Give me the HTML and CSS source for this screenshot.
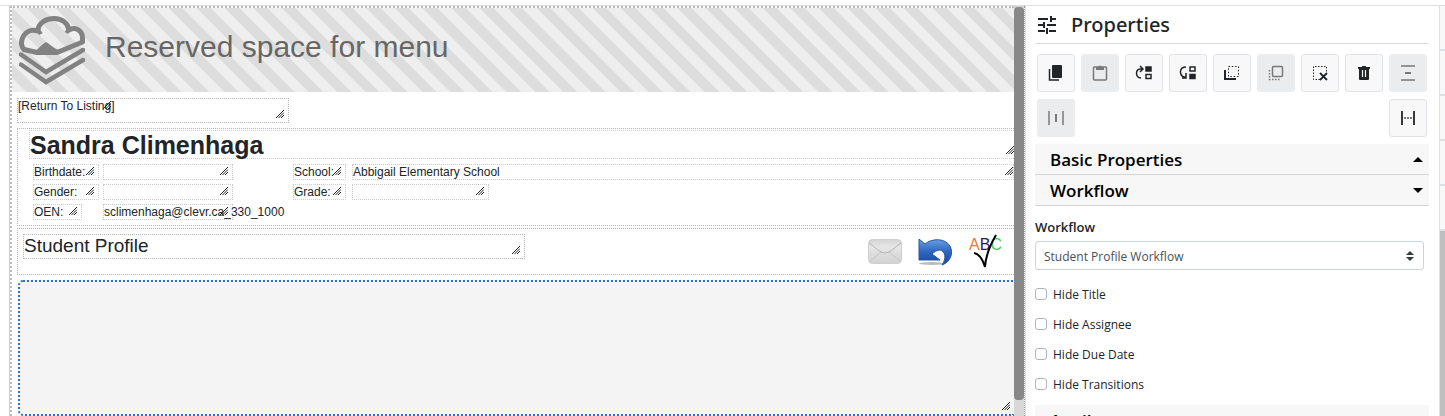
FILE: index.html
```html
<!DOCTYPE html>
<html lang="en">
	<head>
		<meta charset="UTF-8">
		<meta name="viewport" content="width=device-width, initial-scale=1">
		<title>Form designer</title>
		<link rel="stylesheet" href="styles.css">
	</head>
	<body>
		<svg class="defs" aria-hidden="true">
			<symbol id="grip" viewBox="0 0 8 8">
				<path d="M0 8L8 0M2.500 8L8 2.500M5 8L8 5" fill="none" stroke="#222" stroke-width="1"/>
			</symbol>
		</svg>
		<div class="designer">
			<main class="canvas">
				<div class="page">
					<div class="banner">
						<svg class="logo" viewBox="0 0 66 69" fill="none" stroke="#828282" stroke-width="5" aria-hidden="true">
							<path d="M5 33.500C2 30 2 25 4 21C7 15 13 13 19 15C19 7 27 2.500 35 2.500C43 2.500 49 7 50 14C57 10 63.500 15 63.500 22V26L38 36.500H18Z" stroke-linejoin="round"/>
							<path d="M17 14.500Q20 15 22 18M50 13.500Q49 14 47.500 17" stroke-width="4"/>
							<path d="M14 36C19 34 23 28 27 26C31 28 35 33 42 35L38 37H18Z" fill="#828282" stroke="none"/>
							<path d="M2 38.500L27 56L64 34M2 48.500L27 66L64 44" stroke-width="4.500" stroke-linecap="round"/>
						</svg>
						<span>Reserved space for menu</span>
					</div>
					<div class="box return">
						<a class="link" href="#">[Return To Listing]<svg class="grip"><use href="#grip"/></svg></a>
						<svg class="grip"><use href="#grip"/></svg>
					</div>
					<section class="box student">
						<h1 class="field name">Sandra Climenhaga<svg class="grip"><use href="#grip"/></svg></h1>
						<div class="details">
							<div class="field w-label">Birthdate:<svg class="grip"><use href="#grip"/></svg></div>
							<div class="field w-value"><svg class="grip"><use href="#grip"/></svg></div>
							<div class="field w-short">School:<svg class="grip"><use href="#grip"/></svg></div>
							<div class="field">Abbigail Elementary School<svg class="grip edge"><use href="#grip"/></svg></div>
							<div class="field w-label">Gender:<svg class="grip"><use href="#grip"/></svg></div>
							<div class="field w-value"><svg class="grip"><use href="#grip"/></svg></div>
							<div class="field w-short">Grade:<svg class="grip"><use href="#grip"/></svg></div>
							<div class="field w-grade"><svg class="grip"><use href="#grip"/></svg></div>
							<div class="field w-oen">OEN:<svg class="grip"><use href="#grip"/></svg></div>
							<div class="field w-value">sclimenhaga@clevr.ca_330_1000<svg class="grip"><use href="#grip"/></svg></div>
						</div>
					</section>
					<section class="box profile">
						<h2 class="box title">Student Profile<svg class="grip"><use href="#grip"/></svg></h2>
						<div class="tools">
							<button class="tool" type="button" aria-label="Send mail">
								<svg width="34" height="26" viewBox="0 0 34 26">
									<defs><linearGradient id="paper" x2="0" y2="1"><stop stop-color="#d4d4d4"/><stop offset=".3" stop-color="#e6e6e6"/><stop offset="1" stop-color="#d2d2d2"/></linearGradient></defs>
									<rect x=".5" y=".5" width="33" height="24" rx="4" fill="url(#paper)" stroke="#cfcfcf"/>
									<path d="M2 22L13 13M32 22L21 13" fill="none" stroke="#c4c4c4"/>
									<path d="M1 4C7 8 12 14 17 14S27 8 33 4" fill="none" stroke="#b2b2b2"/>
								</svg>
							</button>
							<button class="tool" type="button" aria-label="Undo">
								<svg width="35" height="28" viewBox="0 0 35 28">
									<defs><linearGradient id="blue" x2="0" y2="1"><stop stop-color="#6ba0e4"/><stop offset=".5" stop-color="#2c66bd"/><stop offset="1" stop-color="#1748a0"/></linearGradient></defs>
									<ellipse cx="14" cy="25.500" rx="13" ry="1.500" fill="#bbb"/>
									<path d="M1 1L7 6C14 0 27 0 32 8C36 16 32 24 24 27C29 20 27 13 22 12C19 12 16 14 14 16L22 22H1Z" fill="url(#blue)" stroke="#2457a8"/>
								</svg>
							</button>
							<button class="tool spell" type="button">
								<span class="abc"><i>A</i><i>B</i><i>C</i></span>
								<svg class="check" width="25" height="35" viewBox="0 0 25 35"><path d="M1 19Q8 20 12 33Q13 18 23 1" fill="none" stroke="#000" stroke-width="2"/></svg>
							</button>
						</div>
					</section>
					<section class="dropzone"><svg class="grip"><use href="#grip"/></svg></section>
				</div>
				<div class="scroll"><div class="thumb"></div></div>
			</main>
			<aside class="panel">
				<h2 class="heading">
					<svg width="20" height="20" viewBox="0 0 20 20" fill="none" stroke="#212529" stroke-width="2" aria-hidden="true">
						<path d="M1 4H11M15 4H19M14 1V7M1 10H6M10 10H19M7 7V13M1 16H8M12 16H19M10 13V19"/>
					</svg>
					Properties
				</h2>
				<div class="toolbar">
					<button type="button" aria-label="Copy">
						<svg viewBox="0 0 18 18" fill="#212529"><rect x="5" y="1" width="10" height="13" rx="1"/><path d="M2.500 5V16H12" fill="none" stroke="#212529" stroke-width="1.500"/></svg>
					</button>
					<button type="button" aria-label="Paste" disabled>
						<svg viewBox="0 0 18 18"><rect x="2.500" y="3" width="13" height="13" rx="1" fill="none" stroke="#77797b" stroke-width="1.500"/><path d="M5 3H7Q9 0 11 3H13V6H5Z" fill="#77797b"/></svg>
					</button>
					<button type="button" aria-label="Bring forward">
						<svg viewBox="0 0 18 18" fill="none" stroke="#212529" stroke-width="1.500"><path d="M6 14C0 13 0 5 6 5H8M5 2L8 5L5 8"/><rect x="11" y="3" width="5" height="4" fill="#212529"/><rect x="11" y="10.500" width="5" height="4"/></svg>
					</button>
					<button type="button" aria-label="Send backward">
						<svg viewBox="0 0 18 18" fill="none" stroke="#212529" stroke-width="1.500"><path d="M7 3C0 3 0 11 5 13H7M7 9V14H3"/><rect x="11" y="3" width="5" height="4"/><rect x="11" y="10.500" width="5" height="4" fill="#212529"/></svg>
					</button>
					<button type="button" aria-label="Bring to front">
						<svg viewBox="0 0 18 18" fill="none" stroke="#212529"><rect x="5.500" y="2.500" width="10" height="10" stroke-dasharray="1.500 1.830"/><path d="M2 6V15H13" stroke-width="2"/></svg>
					</button>
					<button type="button" aria-label="Send to back" disabled>
						<svg viewBox="0 0 18 18" fill="none" stroke="#77797b" stroke-width="1.500"><rect x="5.500" y="2.500" width="10" height="10" rx="1"/><path d="M2.500 6V15.500H13" stroke-dasharray="1.500 1.500"/></svg>
					</button>
					<button type="button" aria-label="Deselect">
						<svg viewBox="0 0 18 18" fill="none" stroke="#212529"><path d="M9 15.500H2.500V2.500H15.500V9" stroke-dasharray="1.500 1.500"/><path d="M9 9L16 16M16 9L9 16" stroke-width="1.800"/></svg>
					</button>
					<button type="button" aria-label="Delete">
						<svg viewBox="0 0 18 18" fill="#212529"><path d="M3 3H7V2H11V3H15V5H14V15Q14 16 13 16H5Q4 16 4 15V5H3Z"/><path d="M7.500 6V13M10.500 6V13" stroke="#f8f8f8" stroke-width="1.200"/></svg>
					</button>
					<button type="button" aria-label="Space vertically" disabled>
						<svg viewBox="0 0 18 18" stroke="#77797b" stroke-width="1.500"><path d="M2 2H16M2 16H16"/><path d="M6 9H12" stroke-width="2"/></svg>
					</button>
					<button type="button" aria-label="Center horizontally" disabled>
						<svg viewBox="0 0 18 18" stroke="#77797b" stroke-width="1.500"><path d="M2 2V16M16 2V16"/><path d="M9 5V13" stroke-width="2"/></svg>
					</button>
					<button type="button" aria-label="Space horizontally">
						<svg viewBox="0 0 18 18" stroke="#212529" stroke-width="1.800"><path d="M3 2V16M15 2V16"/><path d="M5 9H13" stroke-dasharray="2 1" stroke="#777"/></svg>
					</button>
				</div>
				<button class="group" type="button">Basic Properties<svg width="10" height="5" viewBox="0 0 10 5"><path d="M0 5L5 0L10 5Z"/></svg></button>
				<button class="group" type="button">Workflow<svg width="10" height="5" viewBox="0 0 10 5"><path d="M0 0H10L5 5Z"/></svg></button>
				<form class="options">
					<label class="caption" for="workflow">Workflow</label>
					<div class="select">
						<select id="workflow"><option>Student Profile Workflow</option></select>
						<svg width="8" height="10" viewBox="0 0 8 10" fill="#343a40"><path d="M0 4L4 0L8 4ZM0 6H8L4 10Z"/></svg>
					</div>
					<label class="check-row"><input type="checkbox">Hide Title</label>
					<label class="check-row"><input type="checkbox">Hide Assignee</label>
					<label class="check-row"><input type="checkbox">Hide Due Date</label>
					<label class="check-row"><input type="checkbox">Hide Transitions</label>
				</form>
				<button class="group" type="button">Attributes</button>
			</aside>
			<div class="rail"><span></span><span></span><span></span><span></span><span></span></div>
		</div>
	</body>
</html>
```

FILE: styles.css
```css
*, *:before, *:after {
	box-sizing: border-box;
}
body {
	margin: 0;
	background: #fff;
	color: #212529;
	font-family: "Open Sans", "Noto Sans", sans-serif;
	font-size: 12px;
	overflow: hidden;
}
h1, h2 {
	margin: 0;
	font-weight: inherit;
}
button {
	font-family: inherit;
	color: inherit;
}
.defs {
	display: none;
}
.designer {
	display: grid;
	grid-template-columns: minmax(0, 1fr) 414px 6px;
	grid-template-rows: 1px minmax(0, 1fr);
	height: 100vh;
	padding-top: 5px;
	padding-left: 9px;
}
.designer:before {
	content: "";
	grid-column: 1 / -1;
	height: 1px;
	margin-left: -9px;
	background: #ddd;
}

/* canvas */
.canvas {
	display: flex;
	border-left: 1px solid #ccc;
	border-right: 1px dotted #999;
	font-family: "Liberation Sans", Arial, sans-serif;
	min-height: 0;
}
.page {
	flex: 1;
	min-width: 0;
	display: flex;
	flex-direction: column;
	border: 2px dotted #bbb;
	border-width: 2px 0 0 2px;
	overflow: hidden;
}
.banner {
	display: flex;
	align-items: center;
	gap: 20px;
	height: 84px;
	flex: none;
	padding: 0 7px 6px;
	background: repeating-linear-gradient(45deg, #eee 0, #eee 10px, #ddd 10px, #ddd 20px);
	color: #666;
	font-size: 30px;
}
.logo {
	width: 66px;
	height: 69px;
	margin-top: 6px;
}
.box {
	position: relative;
	border: 1px dotted #b4b4b4;
}
.field {
	position: relative;
	height: 16px;
	border: 1px dotted #ccc;
	line-height: 14px;
	white-space: nowrap;
}
.grip {
	position: absolute;
	right: 4px;
	bottom: 4px;
	width: 8px;
	height: 8px;
}
.grip.edge {
	right: 0;
}
.return {
	flex: none;
	width: 272px;
	height: 25px;
	margin: 6px 0 5px 5px;
	line-height: 14px;
}
.link {
	position: relative;
	display: inline-block;
	color: inherit;
	text-decoration: none;
}
.student {
	flex: none;
	height: 98px;
	margin-left: 5px;
	padding: 1px 0 0 11px;
	border-right: 0;
}
.name {
	height: 29px;
	border-right: 0;
	font-size: 25px;
	font-weight: bold;
	line-height: 28px;
}
.name .grip {
	right: 0;
}
.details {
	display: grid;
	grid-template-columns: 70px 190px 59px 1fr;
	row-gap: 4px;
	padding: 5px 0 0 4px;
}
.w-label {
	width: 66px;
}
.w-value {
	width: 130px;
}
.w-short {
	width: 53px;
}
.w-grade {
	width: 137px;
}
.w-oen {
	width: 49px;
}
.profile {
	flex: none;
	display: flex;
	justify-content: space-between;
	height: 47px;
	margin: 2px 0 5px 5px;
	padding: 5px 12px 0 5px;
	border-right: 0;
}
.title {
	width: 502px;
	height: 25px;
	font-size: 19px;
	line-height: 21px;
}
.tools {
	display: flex;
	gap: 16px;
	height: 36px;
	align-items: center;
}
.tool {
	display: block;
	padding: 0;
	border: 0;
	background: none;
}
.tool svg {
	display: block;
}
.spell {
	position: relative;
	height: 36px;
	font-size: 16px;
}
.abc {
	display: block;
	height: 36px;
	line-height: 22px;
}
.abc i {
	font-style: normal;
	color: #e07b39;
}
.abc i:nth-child(2) {
	color: #2a1a66;
}
.abc i:nth-child(3) {
	color: #3ecf5a;
}
.spell .check {
	position: absolute;
	left: 4px;
	top: 0;
}
.dropzone {
	position: relative;
	flex: 1;
	margin-left: 6px;
	border: 2px dotted #2f6fd0;
	border-right: 0;
	border-radius: 5px 0 0 5px;
	background: #f4f4f4;
}
.scroll {
	width: 10px;
	padding-top: 1px;
	background: #d8d8d8;
}
.thumb {
	height: 96%;
	border-radius: 4px;
	background: #888;
}

/* properties panel */
.panel {
	border-left: 1px solid #ddd;
	padding: 0 10px 0 9px;
	min-height: 0;
	overflow: hidden;
}
.heading {
	display: flex;
	align-items: center;
	gap: 14px;
	height: 38px;
	padding-left: 2px;
	border-bottom: 1px solid #dcdcdc;
	font-family: "Noto Sans", sans-serif;
	font-size: 20px;
	font-weight: 500;
}
.toolbar {
	display: flex;
	flex-wrap: wrap;
	justify-content: space-between;
	gap: 7px 6px;
	padding: 10px 2px 7px;
}
.toolbar button {
	display: flex;
	align-items: center;
	justify-content: center;
	width: 38px;
	height: 38px;
	padding: 0;
	border: 1px solid #dee2e6;
	border-radius: 3px;
	background: #f8f8f8;
}
.toolbar button:disabled {
	border-color: #ebecee;
	background: #ebecee;
}
.toolbar svg {
	width: 18px;
	height: 18px;
}
.group {
	display: flex;
	align-items: center;
	justify-content: space-between;
	width: 100%;
	height: 31px;
	padding: 0 6px 0 15px;
	border: 0;
	border-bottom: 1px solid #d4d4d4;
	background: #f7f7f7;
	color: #000;
	font-size: 17px;
	font-weight: 600;
}
.options {
	padding: 11px 5px 6px 0;
}
.caption {
	display: block;
	font-size: 13px;
	font-weight: 600;
	line-height: 20px;
	padding-bottom: 4px;
}
.select {
	position: relative;
	margin-bottom: 9px;
}
.select select {
	display: block;
	width: 100%;
	height: 29px;
	padding: 2px 8px 0;
	border: 1px solid #ced4da;
	border-radius: 3px;
	background: #fff;
	color: #495057;
	font-family: inherit;
	font-size: 12px;
	appearance: none;
}
.select svg {
	position: absolute;
	right: 10px;
	top: 10px;
}
.check-row {
	display: flex;
	align-items: center;
	gap: 6px;
	height: 30px;
}
.check-row input {
	width: 12px;
	height: 12px;
	margin: 0;
	border: 1px solid #adb5bd;
	border-radius: 3px;
	background: #fff;
	appearance: none;
}

/* tab strip on the far right */
.rail {
	display: grid;
	grid-auto-rows: 45px;
	border-left: 1px solid #dee2e6;
	background: #bfbfbf;
}
.rail span {
	border-bottom: 2px solid #dee2e6;
	background: #f8f8f8;
}
```
